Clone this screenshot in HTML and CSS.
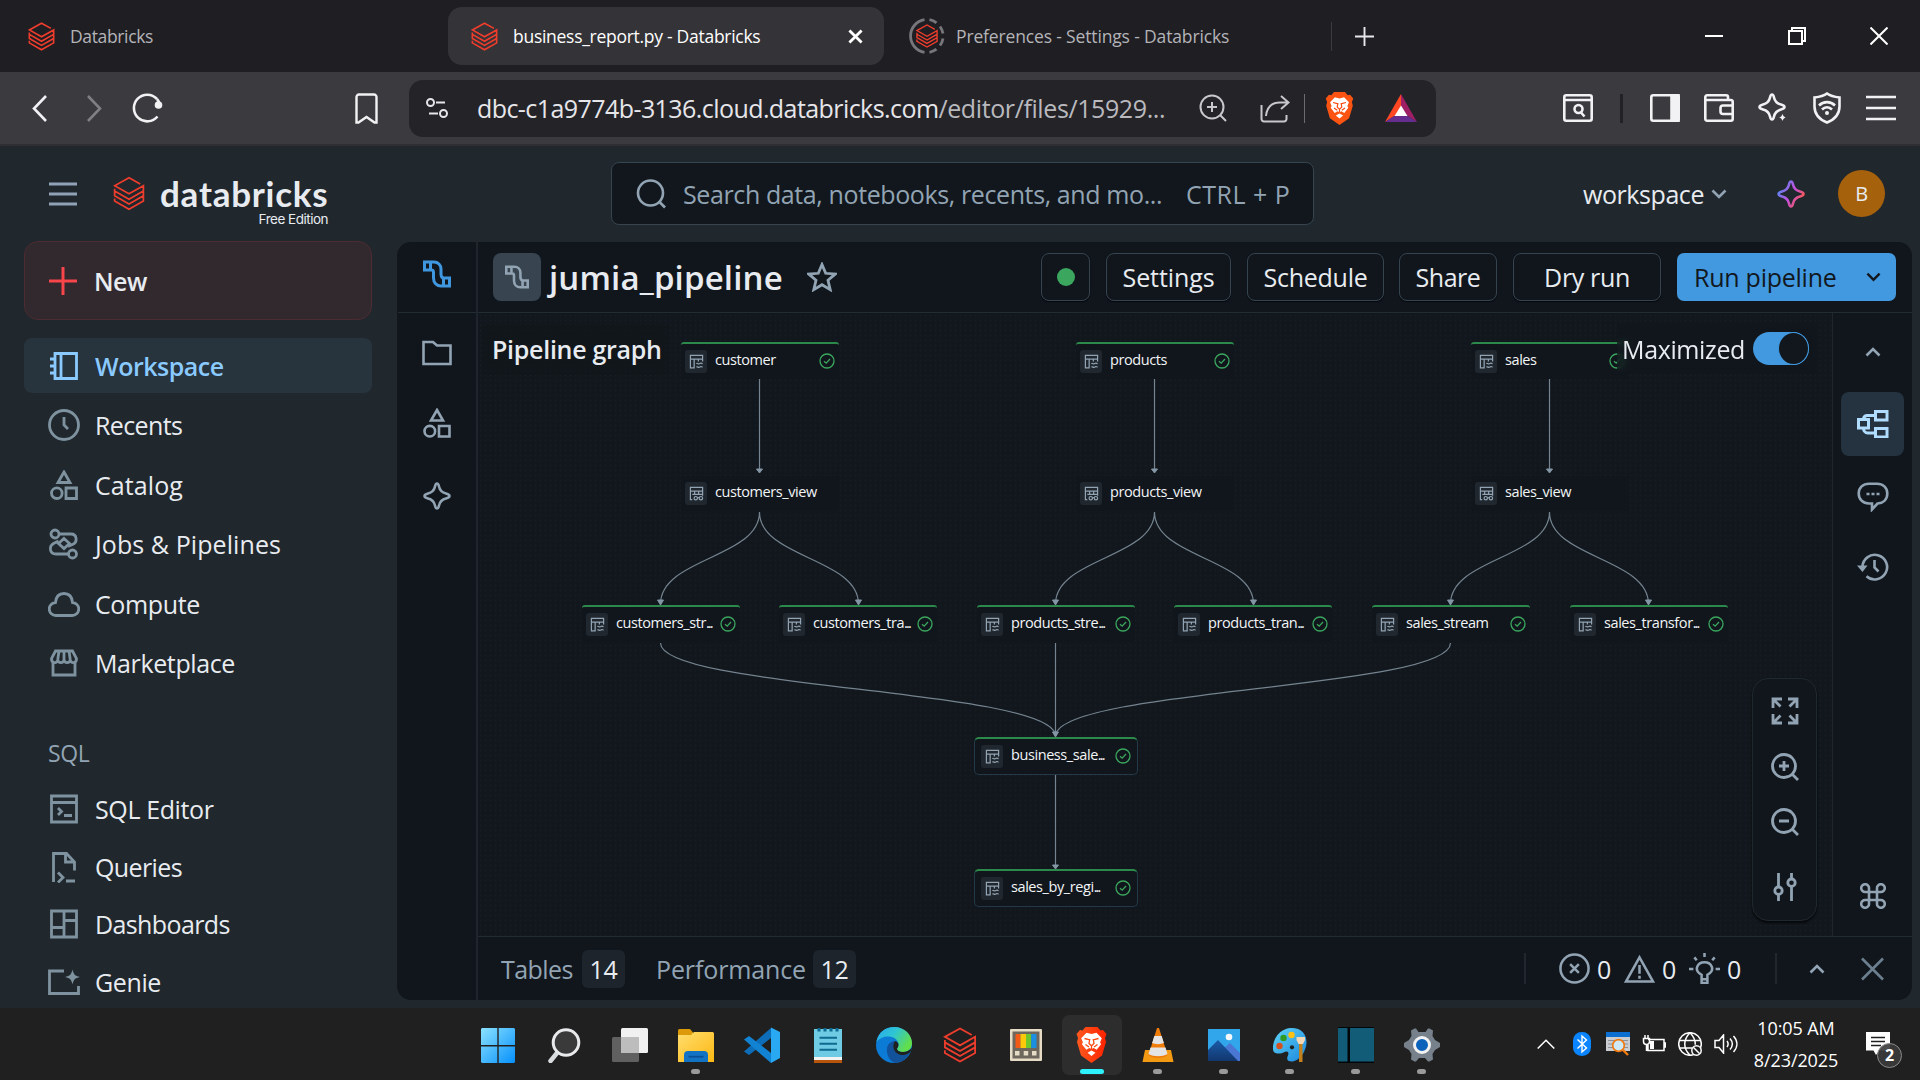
FILE: index.html
```
<!DOCTYPE html>
<html lang="en">
<head>
<meta charset="utf-8">
<title>business_report.py - Databricks</title>
<link rel="stylesheet" href="styles.css">
</head>
<body>
<svg class="defs" aria-hidden="true">
  <defs>
    <linearGradient id="spark" x1="0" y1="0.2" x2="1" y2="0.8"><stop offset="0" stop-color="#4c8df0"/><stop offset=".5" stop-color="#c150e0"/><stop offset="1" stop-color="#ff5a3d"/></linearGradient>
    <linearGradient id="win" x1="0" y1="0" x2="1" y2="1"><stop offset="0" stop-color="#8be2ff"/><stop offset="1" stop-color="#0690fb"/></linearGradient>
    <linearGradient id="brave" x1="0" y1="0" x2="1" y2="0"><stop offset="0" stop-color="#ff5a1f"/><stop offset="1" stop-color="#ff2200"/></linearGradient>
    <linearGradient id="fold" x1="0" y1="0" x2="1" y2="1"><stop offset="0" stop-color="#ffdd6e"/><stop offset="1" stop-color="#fdb813"/></linearGradient>
    <linearGradient id="edge" x1="0" y1="0" x2="1" y2=".5"><stop offset="0" stop-color="#2aa8ee"/><stop offset=".5" stop-color="#2ec5d3"/><stop offset="1" stop-color="#62de4b"/></linearGradient>
    <linearGradient id="paint" x1="0" y1="0" x2="1" y2="1"><stop offset="0" stop-color="#5fd4f7"/><stop offset="1" stop-color="#1a86dc"/></linearGradient>
    <linearGradient id="hill" x1="0" y1="0" x2="0" y2="1"><stop offset="0" stop-color="#1a5ba8"/><stop offset="1" stop-color="#12376f"/></linearGradient>
  </defs>
  <symbol id="i-bricks" viewBox="0 0 28 30"><path d="M23.800 6.600 14 1.200 1.400 8.200 14 15.300 26.600 8.200v4.600L14 20 1.400 12.800M1.400 10.800v6.200L14 24.200 26.600 17v4.600L14 28.800 1.400 21.600v-2.200M1.400 12.800 14 20l12.600-7.200V17"/></symbol>
  <symbol id="i-pipe" viewBox="0 0 28 28"><path d="M1.500 2h6v8h-6zM7.500 2h3.500c4 0 7 3 7 7v5c0 2 1 4 3 4M7.500 10h1c1.500 0 2 1 2 2.500V18c0 4.500 3 8 7.500 8h2.500M20.500 18h6v8h-6z"/></symbol>
  <symbol id="i-folder" viewBox="0 0 30 26"><path d="M1.500 2h9.500l4 3.500h13.500v18.500h-27z"/></symbol>
  <symbol id="i-shapes" viewBox="0 0 28 30"><path d="M14 2 20 12.500H8zM16 18h10.500v10.500H16z"/><ellipse cx="6.800" cy="23.200" rx="5.300" ry="5.300"/></symbol>
  <symbol id="i-spark" viewBox="0 0 28 28"><path d="M14 1.500c1.300 0 1.600 1.200 2 3 .8 3.700 2.200 5.800 7 7 2 .5 3.500 1 3.500 2.500s-1.500 2-3.500 2.500c-4.800 1.200-6.200 3.300-7 7-.4 1.800-.7 3-2 3s-1.600-1.200-2-3c-.8-3.700-2.200-5.800-7-7-2-.5-3.500-1-3.500-2.500s1.500-2 3.500-2.500c4.800-1.200 6.200-3.300 7-7 .4-1.800.7-3 2-3z"/></symbol>
  <symbol id="i-down" viewBox="0 0 16 10"><path d="M1.500 1.500 8 8l6.500-6.500"/></symbol>
  <symbol id="i-up" viewBox="0 0 16 10"><path d="M1.500 8.500 8 2l6.500 6.500"/></symbol>
  <symbol id="i-x" viewBox="0 0 24 24"><path d="M1.500 1.500l21 21M22.500 1.500l-21 21"/></symbol>
  <symbol id="i-zin" viewBox="0 0 28 28"><circle cx="13" cy="13" r="11.500"/><path d="m21 21 6 6M13 8v10M8 13h10"/></symbol>
  <symbol id="i-zout" viewBox="0 0 28 28"><circle cx="13" cy="13" r="11.500"/><path d="m21 21 6 6M8 13h10"/></symbol>
  <symbol id="i-tbl" viewBox="0 0 16 16"><path d="M1.500 1.500h13v4h-13zM1.500 5.500v9.200h4V5.500M10 5.500V8M14.500 5.500V8M7.800 10.300c1.500-1.300 2.200 1.300 3.600 0s2-.2 3.100 0M7.800 14c1.500-1.300 2.200 1.300 3.600 0s2-.2 3.100 0"/></symbol>
  <symbol id="i-view" viewBox="0 0 16 16"><path d="M3.500 14.500h-2v-13h13v9M1.500 5.500h13M6 5.500v3.500M10.300 5.500v3.500M3.500 9h11M9 12.500h1.500"/><circle cx="7.200" cy="13" r="1.800"/><circle cx="12.700" cy="13" r="1.800"/></symbol>
  <symbol id="i-ok" viewBox="0 0 16 16"><circle cx="8" cy="8" r="7"/><path d="m5 8.200 2.200 2 3.800-4.200"/></symbol>
  <symbol id="i-lion" viewBox="0 0 30 36"><path stroke="none" d="M9 0h12l3 3.500 2.500-.5L30 7l-1.500 4 1 4-4 13.500L15 36 4.500 28.500l-4-13.500 1-4L0 7l3.500-4 2.500.5z"/><path fill="#fff" stroke="none" d="M15 7l5-1.200 5.300 5.400-1.700 4 1 2-4.400 5.600-3-1.800L15 22l-2.200-1-3 1.800-4.400-5.600 1-2-1.700-4L10 5.800zM15 23.500l4 2.200-4 3.300-4-3.300z"/><path d="M8 11.500l4.500 1.200M22 11.500l-4.500 1.200M13.300 12l-.8 4.500 2.500 2.300 2.500-2.300-.8-4.500M9 17.500l3.500 2.500M21 17.500 17.500 20M15 19v3" fill="none" stroke="#fb4a12" stroke-width="1.300"/></symbol>
</svg>

<div class="tabs">
  <div class="tab t1"><svg class="ic red fav"><use href="#i-bricks"/></svg><span class="tx">Databricks</span></div>
  <div class="tab t2 on"><svg class="ic red fav"><use href="#i-bricks"/></svg><span class="tx">business_report.py - Databricks</span><svg class="ic tabx" viewBox="0 0 16 16"><path d="m1.500 1.500 13 13M14.500 1.500l-13 13"/></svg></div>
  <div class="tab t3"><svg class="ic load" viewBox="0 0 36 36"><path d="M15.500 1.700A16.500 16.500 0 0 0 15.500 34.300M20.500 1.700a16.500 16.500 0 0 1 7 3.100M31 8.500a16.500 16.500 0 0 1 3 7M34 20.500a16.500 16.500 0 0 1-3 7M27.500 31.200a16.500 16.500 0 0 1-7 3.100" stroke="#77777b" stroke-width="2.800"/><svg class="red" x="6.500" y="6" width="23" height="24" viewBox="0 0 28 30"><use href="#i-bricks"/></svg></svg><span class="tx">Preferences - Settings - Databricks</span></div>
  <div class="tabsep"></div>
  <svg class="ic plus" viewBox="0 0 20 20"><path d="M10 0v20M0 10h20"/></svg>
  <div class="wctl">
    <svg class="ic" viewBox="0 0 18 18"><path d="M0 9h18"/></svg>
    <svg class="ic" viewBox="0 0 18 18"><path d="M1 4h13v13H1zM4 4V1h13v13h-3"/></svg>
    <svg class="ic" viewBox="0 0 18 18"><path d="m.5.5 17 17M17.500.5l-17 17"/></svg>
  </div>
</div>

<div class="toolbar">
  <svg class="ic back" viewBox="0 0 16 28"><path d="M14 1.500 2 14l12 12.500"/></svg>
  <svg class="ic fwd" viewBox="0 0 16 28"><path d="m2 1.500 12 12.500L2 26.500"/></svg>
  <svg class="ic reload" viewBox="0 0 31 30"><path d="M25.500 23.500A13.300 13.300 0 1 1 25 6"/><circle cx="26.500" cy="12" r="3.800" fill="#f2f2f4" stroke="none"/><path d="M25 6c1.500 1.500 2 3 2 5"/></svg>
  <svg class="ic bmark" viewBox="0 0 23 31"><path d="M1.500 29.500V4a2.500 2.500 0 0 1 2.500-2.500h15A2.500 2.500 0 0 1 21.500 4v25.500l-2 0-8-5.500-8 5.500z"/></svg>
  <div class="url">
    <svg class="ic tune" viewBox="0 0 22 22"><circle cx="4.500" cy="5.500" r="3.500"/><path d="M10 5.500h9M3 16.500h9"/><circle cx="17.500" cy="16.500" r="3.500"/></svg>
    <span class="utx">dbc-c1a9774b-3136.cloud.databricks.com<i>/editor/files/15929...</i></span>
    <svg class="ic uz"><use href="#i-zin"/></svg>
    <svg class="ic share" viewBox="0 0 30 30"><path d="M1.500 12v14a2.500 2.500 0 0 0 2.500 2.500h20a2.500 2.500 0 0 0 2.500-2.500v-4M6 23c1-9 6-13.500 14-13.500h7M21 3l7.500 6.500L21 16"/></svg>
    <div class="usep"></div>
    <svg class="ic ulion"><use href="#i-lion"/></svg>
    <svg class="bat" viewBox="0 0 32 28"><path fill="#ff4724" d="M16 0 0 28l10-6.500 6-9z"/><path fill="#9e1f63" d="M16 0l16 28-10-6.500-6-9z"/><path fill="#662d91" d="m0 28 10-6.500h12L32 28z"/><path fill="#fff" d="m16 11.500 6.500 10.500h-13z"/></svg>
  </div>
  <svg class="ic tb1" viewBox="0 0 30 28"><rect x="1.300" y="1.300" width="27.400" height="25.400" rx="2"/><path d="M1.300 6h27.400M18 18.500l3.500 4"/><circle cx="15.500" cy="15" r="4"/></svg>
  <div class="tsep"></div>
  <svg class="ic tb2" viewBox="0 0 30 28"><rect x="1.300" y="1.300" width="27.400" height="25.400" rx="2"/><path fill="#f2f2f4" d="M21.500 1.300h7v25.400h-7z"/></svg>
  <svg class="ic tb3" viewBox="0 0 30 28"><path d="M24 6V3a1.700 1.700 0 0 0-1.700-1.700H3A1.700 1.700 0 0 0 1.300 3v22A1.700 1.700 0 0 0 3 26.700h24a1.700 1.700 0 0 0 1.700-1.700V7.700A1.700 1.700 0 0 0 27 6H1.500M28.700 11.500H19a2.500 2.500 0 0 0-2.500 2.500v3.500A2.500 2.500 0 0 0 19 20h9.700"/></svg>
  <svg class="ic tb4" viewBox="0 0 30 31"><svg width="28" height="28" viewBox="0 0 28 28"><use href="#i-spark"/></svg><path fill="#f2f2f4" stroke="#3b3a3f" stroke-width="1.500" d="M24.500 18c.8 4.800 1.700 5.700 6 6.500-4.300.8-5.200 1.700-6 6.500-.8-4.800-1.700-5.700-6-6.500 4.300-.8 5.200-1.700 6-6.500z"/></svg>
  <svg class="ic tb5" viewBox="0 0 28 32"><path d="M14 1.500c4 3 8 3.500 12.500 4v9c0 8-5 13-12.500 16C6.500 27.500 1.500 22.500 1.500 14.500v-9C6 5 10 4.500 14 1.500zM6 13.500c4.500-4.500 11.500-4.500 16 0M9 17.500c3-3 7-3 10 0"/><circle cx="14" cy="21" r="2" fill="#f2f2f4" stroke="none"/></svg>
  <svg class="ic tb6" viewBox="0 0 30 26"><path d="M0 2h30M0 13h30M0 24h30"/></svg>
</div>

<div class="app">
  <header class="top">
    <svg class="ic burger" viewBox="0 0 28 24"><path d="M0 2h28M0 12h28M0 22h28"/></svg>
    <svg class="ic red blogo"><use href="#i-bricks"/></svg>
    <div class="brand"><b>databricks</b><span>Free Edition</span></div>
    <div class="search"><svg class="ic sic" viewBox="0 0 30 30"><circle cx="14.500" cy="14" r="12.500"/><path d="m23 22.500 6 6"/></svg><span class="sp">Search data, notebooks, recents, and mo...</span><span class="kb">CTRL + P</span></div>
    <div class="ws">workspace<svg class="ic"><use href="#i-down"/></svg></div>
    <svg class="ic aspark"><use href="#i-spark"/></svg>
    <div class="avatar">B</div>
  </header>

  <div class="body">
    <nav class="side">
      <div class="new"><svg class="ic" viewBox="0 0 28 28"><path d="M14 0v28M0 14h28"/></svg>New</div>
      <div class="it act"><svg class="ic" viewBox="0 0 32 32"><path d="M7 3.500h21.500v25H7zM13 3.500v25M2 9h5M2 16h5M2 23h5"/></svg>Workspace</div>
      <div class="it tight"><svg class="ic" viewBox="0 0 32 32"><circle cx="16" cy="16" r="14.500"/><path d="M16 8v8l4 4"/></svg>Recents</div>
      <div class="it wide"><svg class="ic" viewBox="-2 -1 32 32"><use href="#i-shapes" width="28" height="30"/></svg>Catalog</div>
      <div class="it wide"><svg class="ic" viewBox="0 0 32 32"><circle cx="7" cy="6" r="4"/><circle cx="24.500" cy="26" r="4"/><path d="M11 6h12c6 0 7 8 1.500 10.500L20 18.500M20 26H8c-7 0-7-8-2.500-10.500l5-2.500M16 10.500l5.500 5-5.500 5-5.500-5z"/></svg>Jobs &amp; Pipelines</div>
      <div class="it"><svg class="ic" viewBox="0 0 32 32"><path d="M8 27.500a6.500 6.500 0 0 1-.5-13C8 8.500 11.500 5.500 16 5.500s8 3 8.500 9a6.500 6.500 0 0 1-.5 13z"/></svg>Compute</div>
      <div class="it"><svg class="ic" viewBox="0 0 32 32"><path d="M7.500 4h17l4 7.500c0 5.500-5.500 5-6.200 1.500-.6 3.500-5.700 3.500-6.300 0-.6 3.500-5.700 3.500-6.300 0-.7 3.500-6.200 4-6.200-1.500zM9.700 13l1.300-9M16 13V4M22.300 13 21 4M5 15.500v12.500h22V15.500"/></svg>Marketplace</div>
      <div class="sec">SQL</div>
      <div class="it s"><svg class="ic" viewBox="0 0 32 32"><path d="M3.500 3h25v26h-25zM3.500 9.500h25M10 15l3.500 3.500L10 22M16 22.500h8"/></svg>SQL Editor</div>
      <div class="it s tight"><svg class="ic" viewBox="0 0 32 32"><path d="M5.500 31V2.500h13L26.500 11v8.500M17.500 2.500V11h9M10 21.500l5 5-5 5M18 30h9"/></svg>Queries</div>
      <div class="it s tight"><svg class="ic" viewBox="0 0 32 32"><path d="M3.500 3h25v26h-25zM16 3v26M3.500 19.500H16M16 12.500h12.500"/></svg>Dashboards</div>
      <div class="it s"><svg class="ic" viewBox="0 0 32 32"><path d="M16 5H1.500v22.500h29V20"/><path fill="#7e939f" stroke="none" d="M24.500 3.500c1.200 5 2.300 6.300 7.500 7.500-5.200 1.200-6.300 2.500-7.500 7.500-1.200-5-2.300-6.300-7.500-7.500 5.200-1.200 6.300-2.500 7.500-7.500z"/></svg>Genie</div>
    </nav>

    <main class="panel">
      <aside class="rail">
        <div class="railtop"><svg class="ic r0"><use href="#i-pipe"/></svg></div>
        <svg class="ic r1"><use href="#i-folder"/></svg>
        <svg class="ic r2"><use href="#i-shapes"/></svg>
        <svg class="ic r3"><use href="#i-spark"/></svg>
      </aside>
      <section class="main">
        <div class="head">
          <div class="pbox"><svg class="ic"><use href="#i-pipe"/></svg></div>
          <h1>jumia_pipeline</h1>
          <svg class="ic star" viewBox="0 0 30 30"><path d="m15 2.500 3.700 8.800 9.500.8-7.200 6.200 2.200 9.300L15 22.700l-8.200 4.900L9 18.300l-7.200-6.200 9.500-.8z"/></svg>
          <div class="btns">
            <div class="btn b0"><i></i></div><div class="btn b1">Settings</div><div class="btn b2">Schedule</div><div class="btn b3">Share</div><div class="btn b4">Dry run</div>
            <div class="run"><span>Run pipeline</span><svg class="ic"><use href="#i-down"/></svg></div>
          </div>
        </div>
        <div class="mid">
          <div class="canvas">
            <svg class="edges" viewBox="0 0 1355 624">
              <g class="ed">
                <path d="M281.500 66v93M676.500 66v93M1071.500 66v93"/>
                <path d="M281.500 199C281.500 245 182.500 245 182.500 291M281.500 199C281.500 245 380.500 245 380.500 291M676.500 199C676.500 245 577.500 245 577.500 291M676.500 199C676.500 245 775.500 245 775.500 291M1071.500 199C1071.500 245 972.500 245 972.500 291M1071.500 199C1071.500 245 1170.500 245 1170.500 291"/>
                <path d="M182.500 330C182.500 376 577.500 376 577.500 423M577.500 330v93M972.500 330C972.500 376 577.500 376 577.500 423M577.500 462v93"/>
              </g>
              <path class="tips" d="M278.500 156h6l-3 4zM673.500 156h6l-3 4zM1068.500 156h6l-3 4zM179.500 287h6l-3 5zM377.500 287h6l-3 5zM574.500 287h6l-3 5zM772.500 287h6l-3 5zM969.500 287h6l-3 5zM1167.500 287h6l-3 5zM574.500 419h6l-3 5zM574.500 552h6l-3 4z"/>
            </svg>
            <div class="node n-cust"><i><svg class="ic"><use href="#i-tbl"/></svg></i><span>customer</span><svg class="ic ok"><use href="#i-ok"/></svg></div>
            <div class="node n-prod"><i><svg class="ic"><use href="#i-tbl"/></svg></i><span>products</span><svg class="ic ok"><use href="#i-ok"/></svg></div>
            <div class="node n-sale"><i><svg class="ic"><use href="#i-tbl"/></svg></i><span>sales</span><svg class="ic ok"><use href="#i-ok"/></svg></div>
            <div class="node view n-cv"><i><svg class="ic"><use href="#i-view"/></svg></i><span>customers_view</span></div>
            <div class="node view n-pv"><i><svg class="ic"><use href="#i-view"/></svg></i><span>products_view</span></div>
            <div class="node view n-sv"><i><svg class="ic"><use href="#i-view"/></svg></i><span>sales_view</span></div>
            <div class="node n-cs"><i><svg class="ic"><use href="#i-tbl"/></svg></i><span>customers_str<em>...</em></span><svg class="ic ok"><use href="#i-ok"/></svg></div>
            <div class="node n-ct"><i><svg class="ic"><use href="#i-tbl"/></svg></i><span>customers_tra<em>...</em></span><svg class="ic ok"><use href="#i-ok"/></svg></div>
            <div class="node n-ps"><i><svg class="ic"><use href="#i-tbl"/></svg></i><span>products_stre<em>...</em></span><svg class="ic ok"><use href="#i-ok"/></svg></div>
            <div class="node n-pt"><i><svg class="ic"><use href="#i-tbl"/></svg></i><span>products_tran<em>...</em></span><svg class="ic ok"><use href="#i-ok"/></svg></div>
            <div class="node n-ss"><i><svg class="ic"><use href="#i-tbl"/></svg></i><span>sales_stream</span><svg class="ic ok"><use href="#i-ok"/></svg></div>
            <div class="node n-st"><i><svg class="ic"><use href="#i-tbl"/></svg></i><span>sales_transfor<em>...</em></span><svg class="ic ok"><use href="#i-ok"/></svg></div>
            <div class="node hot n-bs"><i><svg class="ic"><use href="#i-tbl"/></svg></i><span>business_sale<em>...</em></span><svg class="ic ok"><use href="#i-ok"/></svg></div>
            <div class="node hot n-sr"><i><svg class="ic"><use href="#i-tbl"/></svg></i><span>sales_by_regi<em>...</em></span><svg class="ic ok"><use href="#i-ok"/></svg></div>
            <div class="glabel">Pipeline graph</div>
            <div class="gmax"><span>Maximized</span><div class="tog"><b></b></div></div>
            <div class="zoomer">
              <svg class="ic" viewBox="0 0 28 28"><path d="M2 11V2h9M2.500 2.500l7 7M17 2h9v9M25.500 2.500l-7 7M2 17v9h9M2.500 25.500l7-7M26 17v9h-9M25.500 25.500l-7-7"/></svg>
              <svg class="ic"><use href="#i-zin"/></svg>
              <svg class="ic"><use href="#i-zout"/></svg>
              <hr>
              <svg class="ic" viewBox="0 0 28 28"><path d="M7.500 0v14M7.500 21.500V28M20.500 0v6M20.500 13.500V28"/><circle cx="7.500" cy="17.700" r="3.700"/><circle cx="20.500" cy="9.700" r="3.700"/></svg>
            </div>
          </div>
          <aside class="rrail">
            <svg class="ic u"><use href="#i-up"/></svg>
            <div class="ract"><svg class="ic" viewBox="0 0 32 28"><path d="M1.500 9.500h10v8.500h-10zM18.500 1.500h11.500v8.500H18.500zM18.500 18.500h11.500V27H18.500zM6.500 9.500c0-3 2-4 4-4h8M6.500 18c0 3 2 5 4 5h8"/></svg></div>
            <svg class="ic c" viewBox="0 0 32 30"><path d="M12 1.700h8c6 0 10.300 4 10.300 9.800S26.500 21 20.500 21.500L15 27.500v-6h-3C6 21.500 1.700 17.300 1.700 11.500S6 1.700 12 1.700z"/><path d="M9.500 12h3M14.500 12h3M19.500 12h3"/></svg>
            <svg class="ic h" viewBox="0 0 32 28"><path d="M5.500 14a12.300 12.300 0 1 1 4 9.200M17.500 7v7.500l4 4"/><path fill="#92a4b3" stroke="none" d="M0 12.500h10.500L5.500 19z"/></svg>
            <svg class="ic k" viewBox="0 0 26 26"><path d="M9 9v8M17 9v8M9 9h8M9 17h8M9 9H5.500A3.900 3.900 0 1 1 9 5.500zM17 9h3.500A3.900 3.900 0 1 0 17 5.500zM9 17H5.500A3.900 3.900 0 1 0 9 20.500zM17 17h3.500a3.900 3.900 0 1 1-3.500 3.500z"/></svg>
          </aside>
        </div>
        <div class="foot">
          <span class="ft tab-t">Tables</span><span class="badge">14</span>
          <span class="ft perf">Performance</span><span class="badge">12</span>
          <div class="stat">
            <svg class="ic" viewBox="0 0 32 32"><circle cx="16" cy="16" r="14.500"/><path d="m11.500 11.500 9 9M20.500 11.500l-9 9"/></svg><span>0</span>
            <svg class="ic" viewBox="0 0 32 32"><path d="M16 4.500 30 29.500H2zM16 12.500v9M16 23.500v3"/></svg><span>0</span>
            <svg class="ic" viewBox="0 0 32 32"><path d="M13 27v-4.500c-9-5-4-13 3-13s12 8 3 13V27zM13 27v4h6v-4M16 0v4M5.500 4.500l2.500 3M26.500 4.500l-2.500 3M0 16.500h4.500M27.500 16.500H32"/></svg><span>0</span>
          </div>
          <div class="fend"><svg class="ic fu"><use href="#i-up"/></svg><svg class="ic fx"><use href="#i-x"/></svg></div>
        </div>
      </section>
    </main>
  </div>
</div>

<div class="task">
  <div class="ti"><svg viewBox="0 0 36 36" class="w36"><path fill="url(#win)" d="M2 1h15.300v17H1V2zM18.700 1H34l1 1v16H18.700zM1 19.400h16.300V36H2l-1-1zM18.700 19.400H35V35l-1 1H18.700z"/></svg></div>
  <div class="ti"><svg viewBox="0 0 36 36" class="w36"><path d="M11 26 4.500 34" stroke="#d9dcdf" stroke-width="4.500" stroke-linecap="round"/><circle cx="20" cy="15.500" r="12.800" fill="#3a3a3a" stroke="#e8eaec" stroke-width="3"/></svg></div>
  <div class="ti"><svg viewBox="0 0 36 36" class="w36"><rect y="10" width="27" height="25" rx="1.500" fill="#606060"/><rect x="9" y="1" width="27" height="25" rx="1.500" fill="#f1f1f1"/><path d="M9 10h18v16H9z" fill="#bdbdbd"/></svg></div>
  <div class="ti dot"><svg viewBox="0 0 36 36" class="w36"><path fill="#dc9a0a" d="M0 3.500A1.500 1.500 0 0 1 1.500 2H12l3 3.500V10H0z"/><path fill="url(#fold)" d="M0 8h13l3-3h18.500A1.500 1.500 0 0 1 36 6.500V35H0z"/><path fill="#1272c4" d="M6 35V28a4 4 0 0 1 4-4h16a4 4 0 0 1 4 4v7z"/><path fill="#0b4f94" d="M10.500 28.800h15v1.800h-15z"/></svg></div>
  <div class="ti"><svg viewBox="0 0 36 36" class="w36"><path fill="#0d6db8" d="M27 1v10L5 28 0 24.500z"/><path fill="#1183d2" d="M0 12.500 5 9l22 17v10z"/><path fill="#29a9f2" d="M27 .5 36 5v26l-9 5z"/></svg></div>
  <div class="ti"><svg viewBox="0 0 36 36" class="w36"><path fill="#6fcbe3" d="M4 2h28v29H4z"/><path fill="#f3f3f3" d="M4 30h28v3H4z"/><path fill="#b6560c" d="M4 33h28v3H4z"/><path d="M9.500 10.700h17.500M9.500 16.700h17.500M9.500 22.700h17.500" stroke="#0d6a90" stroke-width="2"/><path d="M9 1v3.500M15 1v3.500M21 1v3.500M27 1v3.500" stroke="#0d6a90" stroke-width="3"/></svg></div>
  <div class="ti"><svg viewBox="0 0 36 36" class="w36"><circle cx="18" cy="18" r="18" fill="#0c7bd6"/><path fill="url(#edge)" d="M.5 15C2 5 10 0 18 0c11 0 18 8 18 16 0 6-4 9-9 9-4 0-6-1.500-6-3 0-1 1.500-1.500 1.500-4.500 0-4-4-8-10-8-5 0-9.500 2-12 5.500z"/><path fill="#12529b" d="M11 21c1-5 5-7 8-7-4 5-1 13 6 14 3 .3 6-.5 8.500-2C31 32 25 36 19 36c-5-2-9-8-8-15z"/><path fill="#202020" d="M22.500 17.500c0 3-1.500 3.500-1.500 4.500 0 1.500 2 3 6 3 3.500 0 6-1 9-4.500-.5 2.500-1.500 4.500-2.500 5.500-2.500 1.500-5.500 2.300-8.500 2-7-1-10-9-6-14 2 .5 3.500 2 3.500 3.500z"/></svg></div>
  <div class="ti"><svg class="ic red tbr"><use href="#i-bricks"/></svg></div>
  <div class="ti"><svg viewBox="0 0 36 36" class="w36"><rect x="2" y="2" width="32" height="32" rx="1" fill="#e6dcc6"/><path fill="#6d675e" d="M4.500 4.500h27v27h-27z"/><path fill="#f25a16" d="M7.500 7h5v14h-5z"/><path fill="#fcc90a" d="M12.500 7h5.500v14h-5.500z"/><path fill="#6cc62c" d="M18 7h5.200v14H18z"/><path fill="#1b8fe0" d="M23.200 7h5.300v14h-5.300z"/><path fill="#e6dcc6" d="M7 24h4.500v4.500H7zM15.700 24h4.500v4.500h-4.500zM24 24h4.500v4.500H24z"/></svg></div>
  <div class="ti cur"><svg class="tlion"><use href="#i-lion"/></svg></div>
  <div class="ti dot"><svg viewBox="0 0 36 36" class="w36"><path fill="#f39a12" d="M5 23h26l2.500 12h-31z"/><path fill="#f07d0a" d="M17 1h2l8.500 27c-4 4-15 4-19 0z"/><path fill="#e4e4e4" d="M14.300 9h7.400l2.200 7c-3.500 1.500-8.500 1.500-11.800 0zM10.500 20.500h15l2 6.500c-5 3-14 3-19 0z"/></svg></div>
  <div class="ti dot"><svg viewBox="0 0 36 36" class="w36"><path fill="#31a6ea" d="M2 2h32v32H2z"/><path fill="#4a77d4" d="m15 24 9-8 10 10v8H15z"/><path fill="url(#hill)" d="m2 23 10-10 20 21H2z"/><circle cx="23" cy="10" r="3.300" fill="#f4f8fb"/></svg></div>
  <div class="ti dot"><svg viewBox="0 0 36 36" class="w36"><path fill="url(#paint)" d="M1 22C1 9 10 1 20 1c9 0 14.500 6 14.500 14 0 9-7 19.500-15 19.500-4.500 0-5-3-3.500-6 1.500-3.500-1-5-3.500-3.500C8 27.500 1 27.500 1 22z"/><circle cx="7.500" cy="19" r="3.200" fill="#d4501c"/><circle cx="11.500" cy="11" r="3.200" fill="#2f9a24"/><circle cx="19.500" cy="8" r="3.200" fill="#fbc116"/><circle cx="20" cy="20.300" r="2.100" fill="#202020"/><path fill="#c2801c" d="M27 16h3.500v19H27z"/><path fill="#f0d8b8" d="M24.500 10h8.500v3l-2 4h-4.500l-2-4z"/></svg></div>
  <div class="ti dot"><svg viewBox="0 0 36 36" class="w36"><path fill="#020608" d="M0 0h36v36H0z"/><path fill="#125c78" d="M0 1h9.500v33.500H0zM12 1h24v33.500H12z"/></svg></div>
  <div class="ti dot"><svg viewBox="0 0 36 36" class="w36"><path fill="#76818b" d="M14.500 5 12 1.500h-1.500L7 3.500 7.500 9 5 13l-5 3v4l5 3 2.500 4-.5 5.500 3.500 2h1.500l3-3.500h6l3 3.500h1.500l3.500-2-.5-5.500L31 23l5-3v-4l-5-3-2.500-4 .5-5.500-3.500-2H24L21.500 5z"/><circle cx="18" cy="18" r="7.500" fill="#0c62ba" stroke="#f2f2f2" stroke-width="3"/></svg></div>
  <div class="tray">
    <svg class="ic y1" viewBox="0 0 18 10"><path d="m.7 9.500 8.300-8.300 8.300 8.300"/></svg>
    <svg class="y2" viewBox="0 0 18 24"><rect width="18" height="24" rx="8.500" fill="#0a84ff"/><path d="m4.500 7.500 9 8.500L9 20V4l4.500 4-9 8.500" fill="none" stroke="#fff" stroke-width="1.400"/></svg>
    <svg class="y3" viewBox="0 0 24 24"><path fill="#c9cdd1" d="M0 0h24v19H0z"/><path fill="#0a6fd0" d="M0 0h24v5H0z"/><path d="M2 8.500h20M2 12h20M2 15.500h20" stroke="#8d9196" stroke-width="1.200"/><circle cx="12.500" cy="13.500" r="5.800" fill="#cfeaf7" stroke="#f07a10" stroke-width="1.700"/><path d="m17 18 5 5" stroke="#f07a10" stroke-width="2.400"/></svg>
    <svg class="ic y4" viewBox="0 0 24 18"><path d="M6 4.500h16v11H6V10M22 8h1.500v4H22M1.500 3.500h6v3a3 3 0 0 1-6 0zM3 0v3.500M6 0v3.500M4.500 9.500V16"/><path d="M8 6h4v8H8z" fill="#fff" stroke="none"/></svg>
    <svg class="ic y5" viewBox="0 0 24 24"><circle cx="12" cy="12" r="11.300"/><path d="M1 8.500h22M1 16h13M12 .7c-7 7-7 15.600 0 22.600M12 .7c4 4 5.500 7.300 5.200 12"/><circle cx="18.500" cy="18.500" r="4.700" fill="#202020"/><path d="m15.300 15.300 6.400 6.400"/></svg>
    <svg class="ic y6" viewBox="0 0 24 20"><path d="M1 6.500h4L9.500 1v18L5 13.500H1zM13 7c1.500 2 1.500 4 0 6M16 4.500c3 3.500 3 7.500 0 11M19.500 2c4.500 5 4.500 11 0 16"/></svg>
    <div class="clock"><span>10:05 AM</span><span>8/23/2025</span></div>
    <div class="noti"><svg viewBox="0 0 24 24"><path fill="#fff" d="M0 0h24v18.500H13.500L10 23l-2.500-4.500H0z"/><path d="M5 5.500h14M5 9.500h14M5 13.500h10" stroke="#202020" stroke-width="1.300"/></svg><b>2</b></div>
  </div>
</div>
</body>
</html>
```
FILE: styles.css
```
*{box-sizing:border-box}
body{margin:0;width:1920px;height:1080px;overflow:hidden;background:#202020;color:#e8ecf0;font:400 25px/32px "Open Sans","Noto Sans",sans-serif;letter-spacing:-.35px;display:flex;flex-direction:column}
svg{display:block;flex:none}
.defs{position:absolute;width:0;height:0}
.ic{fill:none;stroke:currentColor;stroke-width:2.6}
.red{color:#ee3d2c;stroke:#ee3d2c;stroke-width:1.7;fill:none}
i,em{font-style:normal}

/* tab strip */
.tabs{height:72px;background:#1f1e23;display:flex;align-items:center;font-size:17.5px;flex:none;letter-spacing:-.25px}
.tab{height:58px;display:flex;align-items:center;color:#b4b4b8}
.t1{width:448px;padding-left:28px;letter-spacing:-.36px}
.t2{width:436px;padding-left:23px;background:#343338;border-radius:14px;color:#fff;letter-spacing:-.28px}
.t3{width:447px;padding-left:25px;letter-spacing:-.15px}
.fav{width:27px;height:29px;margin-right:15px}
.t3 .load{width:36px;height:36px;margin-right:11px}
.t2 .tx{width:335px}
.tabx{width:15px;height:15px;stroke-width:3}
.tabsep{width:1px;height:29px;background:#3b3a40}
.plus{width:19px;height:19px;margin-left:23px;color:#e8e8ea;stroke-width:2}
.wctl{margin-left:331px;display:flex;gap:64.5px;color:#fff}
.wctl .ic{width:18px;height:18px;stroke-width:2}

/* browser toolbar */
.toolbar{height:74px;flex:none;background:#3b3a3f;border-bottom:2px solid #2f2e33;display:flex;align-items:center;color:#f2f2f4}
.back{width:16px;height:29px;margin-left:32px}
.fwd{width:16px;height:29px;margin-left:38px;color:#7f7f84}
.reload{width:31px;height:30px;margin-left:30px}
.bmark{width:23px;height:31px;margin-left:192px;stroke-width:2.400}
.url{width:1027px;height:57px;margin-left:31px;background:#242328;border-radius:14px;display:flex;align-items:center;letter-spacing:-.57px;color:#e6e6ea}
.tune{width:22px;height:22px;margin-left:17px;stroke-width:2}
.utx{width:721px;margin-left:29px;white-space:nowrap;padding-bottom:1px}
.utx i{color:#b9b9be;letter-spacing:-.4px}
.uz{width:28px;height:28px;stroke-width:2;color:#c8c8cc;margin-left:1px}
.share{width:30px;height:30px;margin-left:33px;stroke-width:2;color:#c8c8cc}
.usep{width:1px;height:29px;background:#6b6b70;margin-left:14px}
.ulion{width:29px;height:33px;margin-left:20px;fill:#fb5412}
.bat{width:32px;height:28px;margin-left:31px}
.tb1{width:30px;height:28px;margin-left:127px}
.tsep{width:3px;height:29px;background:#222126;margin:0 27px}
.tb2{width:30px;height:28px}
.tb3{width:30px;height:28px;margin-left:24px}
.tb4{width:30px;height:31px;margin-left:24px}
.tb5{width:28px;height:32px;margin-left:25px}
.tb6{width:30px;height:26px;margin-left:25px}

/* application */
.app{height:862px;flex:none;background:#20272d;display:flex;flex-direction:column}
.top{height:95px;display:flex;align-items:center}
.burger{width:28px;height:24px;margin-left:49px;color:#8fa2b6;stroke-width:3}
.blogo{width:32px;height:35px;margin-left:36px;stroke-width:1.5}
.brand{width:172px;margin-left:15px;height:70px;padding-top:14px;display:flex;flex-direction:column;color:#e8ecf0}
.brand b{font:700 35px/40px Lato,"Open Sans",sans-serif;letter-spacing:.75px}
.brand span{font:400 13.5px/14px Inter,"Open Sans",sans-serif;letter-spacing:-.5px;text-align:right;padding-right:4px;margin-top:-1px}
.search{width:703px;height:63px;margin-left:279px;background:#11171d;border:1px solid #36444f;border-radius:8px;display:flex;align-items:center;color:#92a4b3;letter-spacing:-.39px;white-space:nowrap}
.sic{width:30px;height:30px;margin-left:24px}
.sp{margin-left:17px;width:503px}
.kb{letter-spacing:.5px}
.ws{margin-left:269px;display:flex;align-items:center;letter-spacing:-.43px;color:#e8ecf0}
.ws .ic{width:16px;height:10px;margin-left:7px;color:#92a4b3}
.aspark{width:28px;height:28px;margin-left:50px;stroke:url(#spark)}
.avatar{width:47px;height:47px;border-radius:50%;background:#a6610c;margin-left:33px;display:grid;place-items:center;font-size:20px;padding-top:1px}
.body{height:767px;display:flex;align-items:flex-start}

/* sidebar */
.side{width:397px;padding:0 25px 0 24px;height:766px}
.new{height:79px;border:1px solid #4c2b32;background:#32292f;border-radius:14px;display:flex;align-items:center;padding-left:24px;font-weight:600;margin-bottom:18px;letter-spacing:-.5px}
.new .ic{width:28px;height:28px;color:#f8454a;margin-right:17px;stroke-width:3}
.it{height:55px;margin-bottom:4.500px;border-radius:8px;display:flex;align-items:center;padding-left:24px;letter-spacing:-.38px}
.it .ic{width:32px;height:32px;color:#7e939f;margin-right:15px;stroke-width:2.800}
.act{background:#27333d;color:#8acaff;font-weight:600;letter-spacing:-.5px}
.act .ic{color:#8acaff}
.tight{letter-spacing:-.62px}
.wide{letter-spacing:.08px}
.sec{height:57px;line-height:56px;margin:34px 0 1px 24px;font-size:23px;color:#92a4b3}
.it.s{height:53px}

/* workspace panel */
.panel{width:1515px;height:758px;background:#11161d;border-radius:14px;margin-top:1px;display:flex;overflow:hidden}
.rail{width:81px;padding-left:1px;border-right:2px solid #1e252c;display:flex;flex-direction:column;align-items:center;color:#92a4b3}
.railtop{width:100%;height:71px;border-bottom:1px solid #232b33;display:flex;justify-content:center;padding-top:18px}
.r0{width:28px;height:28px;color:#3f97e0;stroke-width:3}
.r1{width:32px;height:26px;margin-top:27px}
.r2{width:28px;height:30px;margin-top:42px}
.r3{width:28px;height:28px;margin-top:44px}
.main{width:1434px;display:flex;flex-direction:column}
.head{height:71px;border-bottom:1px solid #232b33;display:flex;align-items:center;flex:none}
.pbox{width:48px;height:48px;border-radius:8px;background:#38444f;color:#92a4b3;display:grid;place-items:center;margin-left:15px}
.pbox .ic{width:24px;height:24px;stroke-width:3}
h1{margin:0 0 0 8px;width:258px;font:600 33px/44px "Open Sans","Noto Sans",sans-serif;letter-spacing:.15px;padding-top:2px}
.star{width:30px;height:30px;color:#92a4b3;stroke-width:2.800}
.btns{margin-left:204px;display:flex;height:48px}
.btn{height:48px;border:1px solid #36444f;border-radius:8px;display:flex;align-items:center;justify-content:center;box-shadow:0 1px 1px #05080b}
.b0{width:49px}.b0 i{width:18px;height:18px;border-radius:50%;background:#3ba65e}
.b1{width:125px;margin-left:16px;letter-spacing:-.1px}
.b2{width:137px;margin-left:16px;letter-spacing:-.25px}
.b3{width:98px;margin-left:15px;letter-spacing:-.45px}
.b4{width:148px;margin-left:16px}
.run{width:219px;height:48px;margin-left:16px;border-radius:7px;background:#4299e0;color:#11171d;display:flex;align-items:center;padding-left:17px;letter-spacing:-.25px}
.run span{width:172px}.run .ic{width:15px;height:10px}
.mid{height:623px;display:flex;flex:none}
.canvas{width:1355px;position:relative;overflow:hidden;background-color:#11171c;background-image:radial-gradient(circle,#171d22 .8px,transparent 1.100px);background-size:5px 5px;border-right:1px solid #1e252c}
.edges{position:absolute;left:0;top:0;width:1355px;height:624px}
.ed{fill:none;stroke:#74838f;stroke-width:1.200}
.tips{fill:#8396a5;stroke:#8396a5}

/* graph nodes, placed on the free canvas */
.node{position:absolute;width:158px;height:37px;background:#11161c;border-top:2px solid #2b8a4b;border-radius:3px;display:flex;align-items:center;font-size:14.500px;line-height:20px;padding:0 0 2px 4px;letter-spacing:-.42px;color:#f2f5f7;white-space:nowrap}
.node i{width:22px;height:23px;border-radius:3px;background:#20272e;display:grid;place-items:center;margin-right:8px;color:#92a4b3;margin-top:1px}
.node i .ic{width:15px;height:15px;stroke-width:1.300}
.node span{width:104px;padding-bottom:1px}
.node em{letter-spacing:-1.900px}
.ok{width:16px;height:16px;color:#3ba65e;stroke-width:1.300}
.view{border-top-color:transparent;background-clip:padding-box}
.hot{width:164px;height:38px;border:1px solid #23394a;border-top:2px solid #2b8a4b;padding-left:6px;border-radius:5px}
.n-cust,.n-prod,.n-sale{top:29px}
.n-cv,.n-pv,.n-sv{top:161px}
.n-cs,.n-ct,.n-ps,.n-pt,.n-ss,.n-st{top:292px}
.n-cust,.n-cv{left:203px}.n-prod,.n-pv{left:598px}.n-sale,.n-sv{left:993px}
.n-cs{left:104px}.n-ct{left:301px}.n-ps{left:499px}.n-pt{left:696px}.n-ss{left:894px}.n-st{left:1092px}
.n-bs{left:496px;top:424px}.n-sr{left:496px;top:556px}
.glabel{position:absolute;left:4px;top:12px;padding:6px 8px 8px 10px;font-weight:600;letter-spacing:-.28px;line-height:36px;background:#11161ccc}
.gmax{position:absolute;left:1139px;top:11px;width:200px;height:50px;padding:0 0 0 5px;background:#11161c99;backdrop-filter:blur(3px);display:flex;align-items:center;letter-spacing:-.36px}
.gmax span{width:131px}
.tog{width:56px;height:33px;border-radius:17px;background:#4299e0;display:flex;justify-content:flex-end;margin-top:-2px}
.tog b{width:31px;height:33px;border-radius:50%;background:#11171d;border:1px solid #4299e0}
.zoomer{position:absolute;left:1274px;top:365px;width:65px;height:243px;border:1px solid #20282f;border-radius:16px;background:#11161d;box-shadow:0 2px 2px #07090c;display:flex;flex-direction:column;align-items:center;padding-top:18px;color:#92a4b3}
.zoomer .ic{width:28px;height:28px;margin-bottom:27.500px;stroke-width:2.800}
.zoomer hr{width:47px;height:2px;border:0;background:#262e36;margin:-8px 0 17px}
.rrail{width:79px;display:flex;flex-direction:column;align-items:center;color:#92a4b3}
.u{width:16px;height:10px;margin-top:34px}
.ract{width:63px;height:64px;border-radius:8px;background:#24333f;color:#b0dcff;display:grid;place-items:center;margin-top:35px}
.ract .ic{width:32px;height:28px;stroke-width:3}
.c{width:32px;height:30px;margin-top:26px}
.h{width:32px;height:28px;margin-top:41px}
.k{width:26px;height:26px;margin-top:302px}

/* bottom drawer */
.foot{height:64px;border-top:1px solid #232b33;display:flex;align-items:center;color:#92a4b3;padding-left:23px}
.tab-t{width:81px;letter-spacing:-.54px}
.badge{width:43px;height:38px;border-radius:6px;background:#1d242b;color:#e8ecf0;text-align:center;line-height:38px}
.perf{margin-left:31px;width:157px;letter-spacing:-.12px}
.stat{margin-left:668px;width:253px;height:31px;border-left:2px solid #20272e;border-right:2px solid #20272e;display:flex;align-items:center;padding-left:33px}
.stat .ic{width:31px;height:31px}
.stat span{width:34px;padding-left:7px;color:#e8ecf0}
.fend{display:flex;align-items:center;margin-left:32px}
.fu{width:16px;height:10px;margin-right:35px}.fx{width:25px;height:24px;color:#6b7f8e}

/* taskbar */
.task{height:72px;background:#202020;display:flex;align-items:flex-start;padding:7px 0 0 464.500px;flex:none}
.ti{width:66px;height:60px;display:flex;flex-direction:column;align-items:center;padding-top:12px}
.w36{width:36px;height:36px}
.dot::after{content:"";width:9px;height:5px;border-radius:3px;background:#9a9a9a;margin-top:6px}
.tbr{width:34px;height:36px;stroke-width:1.500}
.cur{background:#2d2d2d;border-radius:7px;width:60px;margin:0 3px}
.cur::after{content:"";width:24px;height:5px;border-radius:3px;background:#2ef2fb;margin-top:6px}
.tlion{width:31px;height:36px;fill:url(#brave)}
.tray{display:flex;align-items:center;margin-left:82.500px;height:58px;color:#fff}
.tray .ic{stroke-width:1.500}
.y1{width:18px;height:10px}
.y2{width:18px;height:24px;margin-left:18px}
.y3{width:24px;height:24px;margin-left:15px}
.y4{width:24px;height:18px;margin-left:12px}
.y5{width:24px;height:24px;margin-left:12px}
.y6{width:24px;height:20px;margin-left:12px}
.clock{width:88px;margin-left:14px;font-size:18px;line-height:32px;letter-spacing:-.1px;text-align:center;display:flex;flex-direction:column}
.noti{position:relative;width:24px;height:24px;margin-left:26px}
.noti svg{width:24px;height:24px}
.noti b{position:absolute;left:11px;top:11px;width:25px;height:25px;border-radius:50%;background:#3a3a3ae8;border:1px solid #8a8a8a;font:700 16px/23px "Open Sans",sans-serif;text-align:center}
```
